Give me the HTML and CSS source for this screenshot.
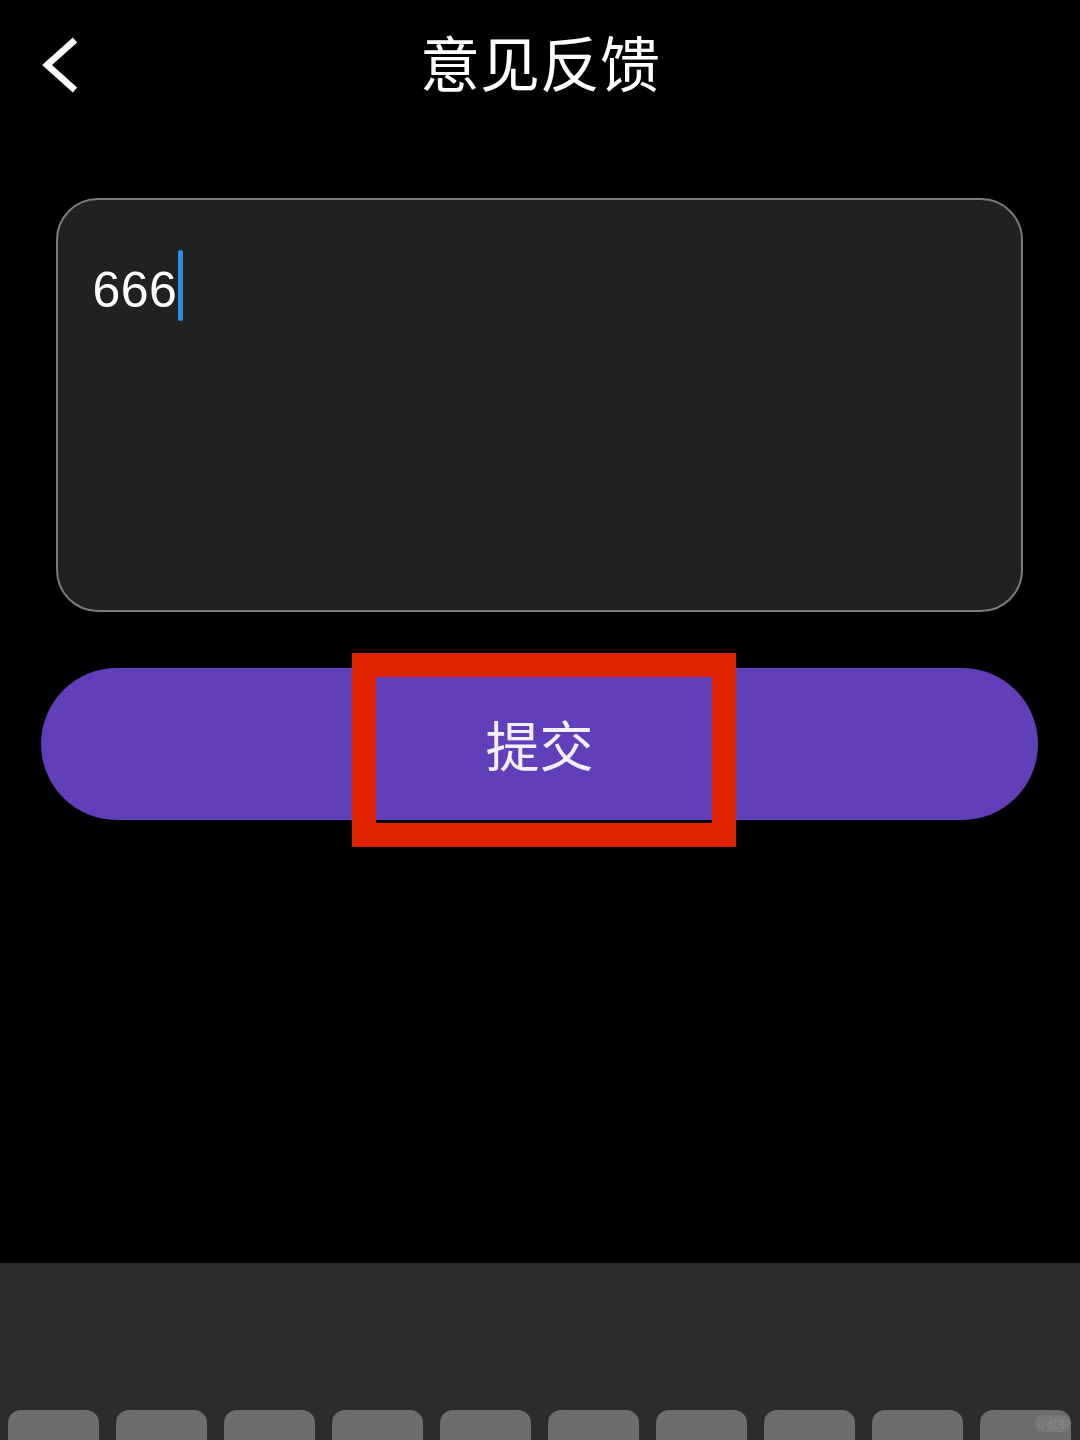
FILE: index.html
```html
<!DOCTYPE html>
<html lang="zh-CN">
<head>
<meta charset="utf-8">
<title>意见反馈</title>
<link rel="stylesheet" href="styles.css">
</head>
<body>
<div class="page">
  <header class="topbar">
    <div class="back">
      <svg width="40" height="60" viewBox="0 0 40 60"><polyline points="33,3 5,28 33,53" fill="none" stroke="#fff" stroke-width="6.5" stroke-linecap="butt" stroke-linejoin="miter"/></svg>
    </div>
    <h1 class="title">意见反馈</h1>
    <div></div>
  </header>
  <main class="content">
    <div class="inputbox">
      <span class="typed">666</span><span class="caret"></span>
    </div>
    <div class="submit-wrap">
      <button class="submit">提交</button>
      <div class="highlight"></div>
    </div>
  </main>
  <footer class="keyboard">
    <div class="keys">
      <div class="key"></div><div class="key"></div><div class="key"></div><div class="key"></div><div class="key"></div>
      <div class="key"></div><div class="key"></div><div class="key"></div><div class="key"></div>
      <div class="key last"><span class="mark">小红书</span></div>
    </div>
  </footer>
</div>
</body>
</html>
```
FILE: styles.css
```css
html, body {
  margin: 0;
  padding: 0;
  background: #000;
}
.page {
  width: 1080px;
  height: 1440px;
  display: flex;
  flex-direction: column;
  overflow: hidden;
  font-family: "Noto Sans", "Noto Sans CJK SC", sans-serif;
  color: #fff;
}
.topbar {
  height: 130px;
  display: grid;
  grid-template-columns: 1fr auto 1fr;
  align-items: center;
}
.back {
  padding-left: 42px;
  padding-top: 4px;
  display: flex;
  align-items: center;
  height: 60px;
}
.back svg { display: block; }
.title {
  margin: 0;
  padding-bottom: 8px;
  font-family: "Noto Sans CJK SC", sans-serif;
  font-weight: 400;
  font-size: 60px;
  line-height: 1;
  color: #fff;
  letter-spacing: 0;
}
.content {
  display: flex;
  flex-direction: column;
  padding-top: 68px;
}
.inputbox {
  margin: 0 57px 0 56px;
  height: 414px;
  box-sizing: border-box;
  background: #212121;
  border: 2.5px solid #7b7b7b;
  border-radius: 42px;
  padding: 49.5px 0 0 34.5px;
  display: flex;
  align-items: flex-start;
}
.typed {
  margin-top: 5px;
  font-family: "Liberation Sans", "Noto Sans", sans-serif;
  font-size: 50px;
  line-height: 70px;
  color: #fff;
  letter-spacing: 0.5px;
}
.caret {
  width: 5px;
  height: 71px;
  background: #2e8be0;
  border-radius: 3px;
  margin-left: 1px;
}
.submit-wrap {
  position: relative;
  margin: 56px 42px 0 41px;
}
.submit {
  display: block;
  width: 100%;
  height: 152px;
  border: none;
  border-radius: 76px;
  background: #623fba;
  color: #f4f0fa;
  font-family: "Noto Sans CJK SC", sans-serif;
  font-size: 54px;
  line-height: 1;
  padding: 0;
}
.highlight {
  position: absolute;
  left: 311px;
  top: -15px;
  width: 384px;
  height: 194px;
  box-sizing: border-box;
  border: 24px solid #e02300;
}
.keyboard {
  margin-top: auto;
  height: 177px;
  background: #2c2c2c;
  padding-top: 147px;
  box-sizing: border-box;
  overflow: hidden;
}
.keys {
  display: flex;
  gap: 17px;
  padding-left: 8px;
}
.key {
  width: 91px;
  height: 60px;
  flex: none;
  background: #6d6d6d;
  border-radius: 13px;
}
.key.last {
  position: relative;
}
.mark {
  position: absolute;
  top: 5px;
  right: 0;
  width: 36px;
  height: 17px;
  border-radius: 9px;
  background: rgba(255,255,255,0.08);
  color: #8a8a8a;
  font-family: "Noto Sans CJK SC", sans-serif;
  font-size: 10px;
  line-height: 17px;
  text-align: center;
}
```
